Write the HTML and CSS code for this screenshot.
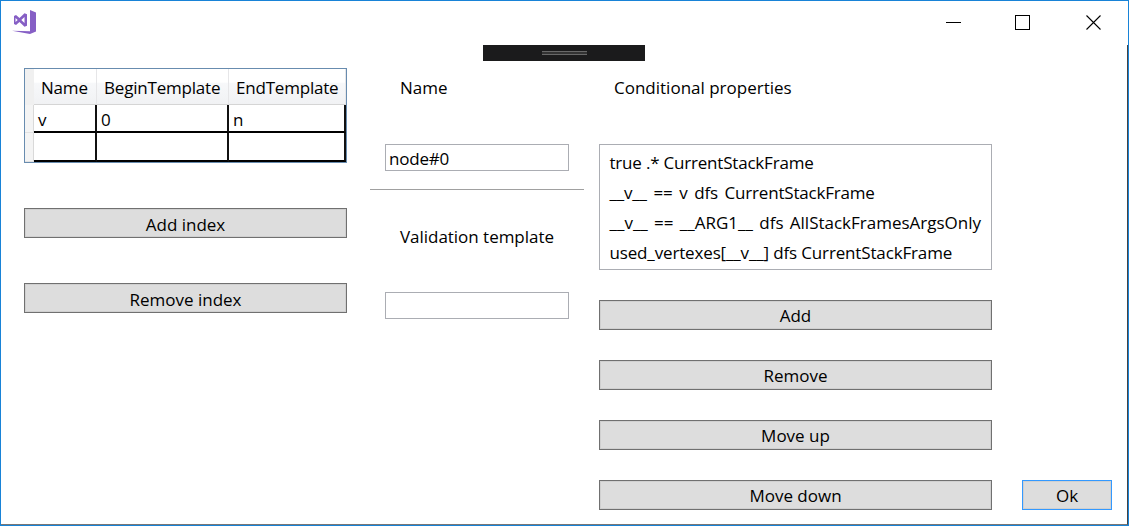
FILE: index.html
```html
<!DOCTYPE html>
<html lang="en">
<head>
<meta charset="utf-8">
<title>Node settings</title>
<link rel="stylesheet" href="styles.css">
</head>
<body>
<div class="window">
  <header class="titlebar">
    <svg class="logo" width="24" height="24" viewBox="0 0 24 24"><path fill="#865fc5" fill-rule="evenodd" d="M18 0l6 2.4v19.2L18 24 0 20.8 18 21.3zM12.500 3.200L15 4.200v11.600l-2.500 1L7.500 12.100 4 15 2 14V6l2-1 3.500 2.900zM12.500 7L9.300 10l3.200 3zM3.500 7.900v4.200L5.700 10z"/></svg>
    <div class="controls">
      <svg width="16" height="16" viewBox="0 0 16 16" shape-rendering="crispEdges"><path d="M0 7.500h15" stroke="#000"/></svg>
      <svg width="16" height="16" viewBox="0 0 16 16" shape-rendering="crispEdges"><path d="M.5.5h14v14H.5z" fill="none" stroke="#000"/></svg>
      <svg width="16" height="16" viewBox="0 0 16 16"><path d="M.5.5l14 14M14.500.5l-14 14" stroke="#000" stroke-width="1.100"/></svg>
    </div>
  </header>
  <div class="debugbar"><i class="grip"></i></div>
  <main class="content">
    <section class="indexes">
      <div class="grid">
        <div class="corner"></div><div class="head">Name</div><div class="head">BeginTemplate</div><div class="head">EndTemplate</div>
        <div class="rowhead"></div><div class="cell">v</div><div class="cell">0</div><div class="cell">n</div>
        <div class="rowhead"></div><div class="cell"></div><div class="cell"></div><div class="cell"></div>
      </div>
      <button class="btn">Add index</button>
      <button class="btn">Remove index</button>
    </section>
    <section class="node">
      <div class="label">Name</div>
      <div class="field">node#0</div>
      <hr class="rule">
      <div class="label validation">Validation template</div>
      <div class="field"></div>
    </section>
    <section class="props">
      <div class="label cond">Conditional properties</div>
      <ul class="list">
        <li>true .* CurrentStackFrame</li>
        <li class="loose">__v__ == v dfs CurrentStackFrame</li>
        <li class="looser">__v__ == __ARG1__ dfs AllStackFramesArgsOnly</li>
        <li class="even">used_vertexes[__v__] dfs CurrentStackFrame</li>
      </ul>
      <button class="btn">Add</button>
      <button class="btn">Remove</button>
      <button class="btn">Move up</button>
      <button class="btn">Move down</button>
    </section>
    <button class="btn ok">Ok</button>
  </main>
</div>
</body>
</html>
```
FILE: styles.css
```css
* { box-sizing: border-box; }
body { margin: 0; background: #fff; }
.window {
  width: 1129px; height: 526px; border: 1px solid #1883d7; background: #fff;
  display: flex; flex-direction: column;
  font: 17px/24px "Open Sans", "Noto Sans", sans-serif; color: #000; letter-spacing: -0.2px;
  white-space: nowrap;
}
.titlebar { height: 44px; flex: none; display: flex; justify-content: space-between; padding: 9px 26px 0 11px; }
.logo { display: block; }
.controls { display: flex; gap: 55px; padding-top: 5px; }
.controls svg { display: block; }
.controls svg:first-child { margin-right: -2px; }
.debugbar {
  position: absolute; left: 483px; top: 45px; width: 162px; height: 16px; background: #1b1b1c;
  display: flex; justify-content: center; padding-top: 6px;
}
.grip { width: 45px; height: 4px; background: #333; border: solid #686868; border-width: 1px 0; }
.content {
  flex: 1; display: flex; align-items: flex-start; padding-left: 23px; min-height: 0;
  border-right: 1px solid #444; border-bottom: 1px solid #777;
}
.indexes { width: 323px; padding-top: 23px; display: flex; flex-direction: column; gap: 45px; }
.grid {
  height: 95px; border: 1px solid #688caf; display: grid;
  grid-template-columns: 9px 63px 132px 117px; grid-template-rows: 36px 28px 29px;
}
.corner { background: #f0f0f0; }
.head {
  padding: 7px 0 0 7px; border-right: 1px solid #e6e6e8; border-bottom: 1px solid #d5d5d5;
  background: linear-gradient(#fff 0 38%, #f7f8fa 40%, #f1f2f4);
}
.rowhead { background: #f4f4f4; border-right: 1px solid #d9d9d9; border-bottom: 1px solid #e2e2e2; }
.cell { border-right: 2px solid #111; border-bottom: 2px solid #000; padding: 3px 0 0 4px; line-height: 23px; }
.btn {
  display: block; width: 100%; height: 30px; margin: 0; padding: 2px 0 0; border: 1px solid #707070;
  box-shadow: inset 0 0 0 1px #d0d0d0; background: #ddd; font: inherit; line-height: 26px; letter-spacing: 0; color: #000;
  text-align: center;
}
.indexes .btn { padding-top: 3px; line-height: 25px; }
.node { width: 214px; margin-left: 23px; padding-top: 31px; }
.label { height: 24px; padding-left: 30px; letter-spacing: -0.03px; }
.field { width: 184px; height: 27px; border: 1px solid #abadb3; margin: 44px 15px 0; padding: 2px 3px; }
.rule { height: 1px; border: 0; margin: 18px 0 0; background: #a0a0a0; }
.validation { margin-top: 35px; }
.validation + .field { margin-top: 43px; }
.props { width: 393px; margin-left: 15px; padding-top: 31px; }
.cond { padding-left: 15px; letter-spacing: 0; }
.list { list-style: none; margin: 44px 0 0; height: 126px; border: 1px solid #abadb3; padding: 2px 9.5px; }
.list li { height: 30px; line-height: 31px; }
.loose { word-spacing: 2.5px; }
.looser { letter-spacing: 0; word-spacing: 1.9px; }
.even { letter-spacing: -0.15px; }
.props .btn { margin-top: 30px; }
.ok { width: 90px; margin: 435px 0 0 30px; border-color: #3399ff; }
```
